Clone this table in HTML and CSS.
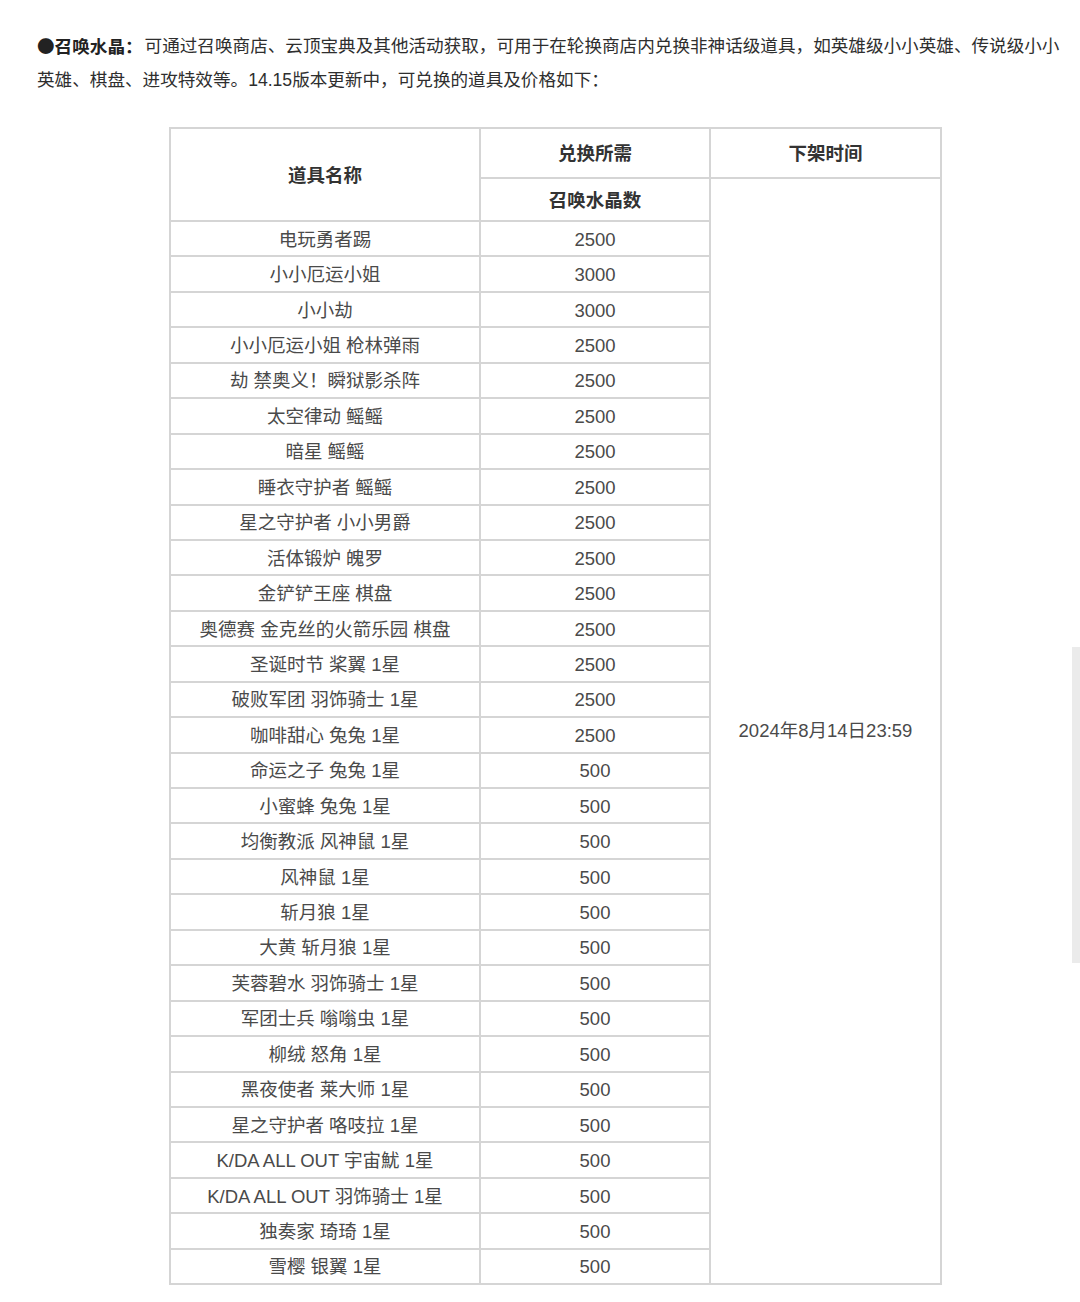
FILE: index.html
```html
<!DOCTYPE html>
<html lang="zh">
<head>
<meta charset="utf-8">
<link rel="stylesheet" href="styles.css">
</head>
<body>
<div class="page">
  <p class="intro"><b class="lead">●召唤水晶：</b>可通过召唤商店、云顶宝典及其他活动获取，可用于在轮换商店内兑换非神话级道具，如英雄级小小英雄、传说级小小英雄、棋盘、进攻特效等。14.15版本更新中，可兑换的道具及价格如下：</p>
  <table class="shop">
    <colgroup><col class="c1"><col class="c2"><col class="c3"></colgroup>
    <tr class="hr1"><th rowspan="2">道具名称</th><th>兑换所需</th><th>下架时间</th></tr>
    <tr class="hr2"><th>召唤水晶数</th><td rowspan="31" class="date">2024年8月14日23:59</td></tr>
    <tr><td>电玩勇者踢</td><td>2500</td></tr>
    <tr><td>小小厄运小姐</td><td>3000</td></tr>
    <tr><td>小小劫</td><td>3000</td></tr>
    <tr><td>小小厄运小姐 枪林弹雨</td><td>2500</td></tr>
    <tr><td>劫 禁奥义！瞬狱影杀阵</td><td>2500</td></tr>
    <tr><td>太空律动 鳐鳐</td><td>2500</td></tr>
    <tr><td>暗星 鳐鳐</td><td>2500</td></tr>
    <tr><td>睡衣守护者 鳐鳐</td><td>2500</td></tr>
    <tr><td>星之守护者 小小男爵</td><td>2500</td></tr>
    <tr><td>活体锻炉 魄罗</td><td>2500</td></tr>
    <tr><td>金铲铲王座 棋盘</td><td>2500</td></tr>
    <tr><td>奥德赛 金克丝的火箭乐园 棋盘</td><td>2500</td></tr>
    <tr><td>圣诞时节 桨翼 1星</td><td>2500</td></tr>
    <tr><td>破败军团 羽饰骑士 1星</td><td>2500</td></tr>
    <tr><td>咖啡甜心 兔兔 1星</td><td>2500</td></tr>
    <tr><td>命运之子 兔兔 1星</td><td>500</td></tr>
    <tr><td>小蜜蜂 兔兔 1星</td><td>500</td></tr>
    <tr><td>均衡教派 风神鼠 1星</td><td>500</td></tr>
    <tr><td>风神鼠 1星</td><td>500</td></tr>
    <tr><td>斩月狼 1星</td><td>500</td></tr>
    <tr><td>大黄 斩月狼 1星</td><td>500</td></tr>
    <tr><td>芙蓉碧水 羽饰骑士 1星</td><td>500</td></tr>
    <tr><td>军团士兵 嗡嗡虫 1星</td><td>500</td></tr>
    <tr><td>柳绒 怒角 1星</td><td>500</td></tr>
    <tr><td>黑夜使者 莱大师 1星</td><td>500</td></tr>
    <tr><td>星之守护者 咯吱拉 1星</td><td>500</td></tr>
    <tr><td>K/DA ALL OUT 宇宙魷 1星</td><td>500</td></tr>
    <tr><td>K/DA ALL OUT 羽饰骑士 1星</td><td>500</td></tr>
    <tr><td>独奏家 琦琦 1星</td><td>500</td></tr>
    <tr><td>雪樱 银翼 1星</td><td>500</td></tr>
  </table>
</div>
<div class="scroll-thumb"></div>
</body>
</html>
```

FILE: styles.css
```css
html, body {
  margin: 0;
  padding: 0;
  background: #ffffff;
}

body {
  font-family: "Noto Sans CJK SC", sans-serif;
  color: #333333;
}

.page {
  padding: 29px 8px 0 37px;
}

.intro {
  margin: 0;
  height: 68px;
  font-family: "Liberation Sans", "Noto Sans CJK SC", sans-serif;
  font-size: 17.6px;
  line-height: 34px;
  color: #2e2e2e;
}

.intro .lead {
  display: inline-block;
  font-family: "Noto Sans CJK SC", sans-serif;
  font-weight: 700;
  line-height: 34px;
  vertical-align: top;
  color: #222222;
  margin-right: 2px;
}

.shop {
  margin: 30px 0 0 132px;
  border-collapse: collapse;
  table-layout: fixed;
  width: 771px;
  font-family: "Liberation Sans", "Noto Sans CJK SC", sans-serif;
  font-size: 18.5px;
  color: #4a4a4a;
}

.shop col.c1 { width: 310px; }
.shop col.c2 { width: 230px; }
.shop col.c3 { width: 231px; }

.shop th,
.shop td {
  border: 2px solid #d5d5d5;
  padding: 2px 0 0 0;
  text-align: center;
  vertical-align: middle;
  line-height: 22px;
}

.shop th {
  font-weight: 700;
  color: #333333;
}

.shop tr { height: 35.45px; }
.shop tr.hr1 { height: 50px; }
.shop tr.hr2 { height: 43px; }

.shop td.date {
  padding-top: 0;
  color: #4a4a4a;
}

.scroll-thumb {
  position: fixed;
  right: 0;
  top: 647px;
  width: 8px;
  height: 316px;
  background: #ebebeb;
}
```
